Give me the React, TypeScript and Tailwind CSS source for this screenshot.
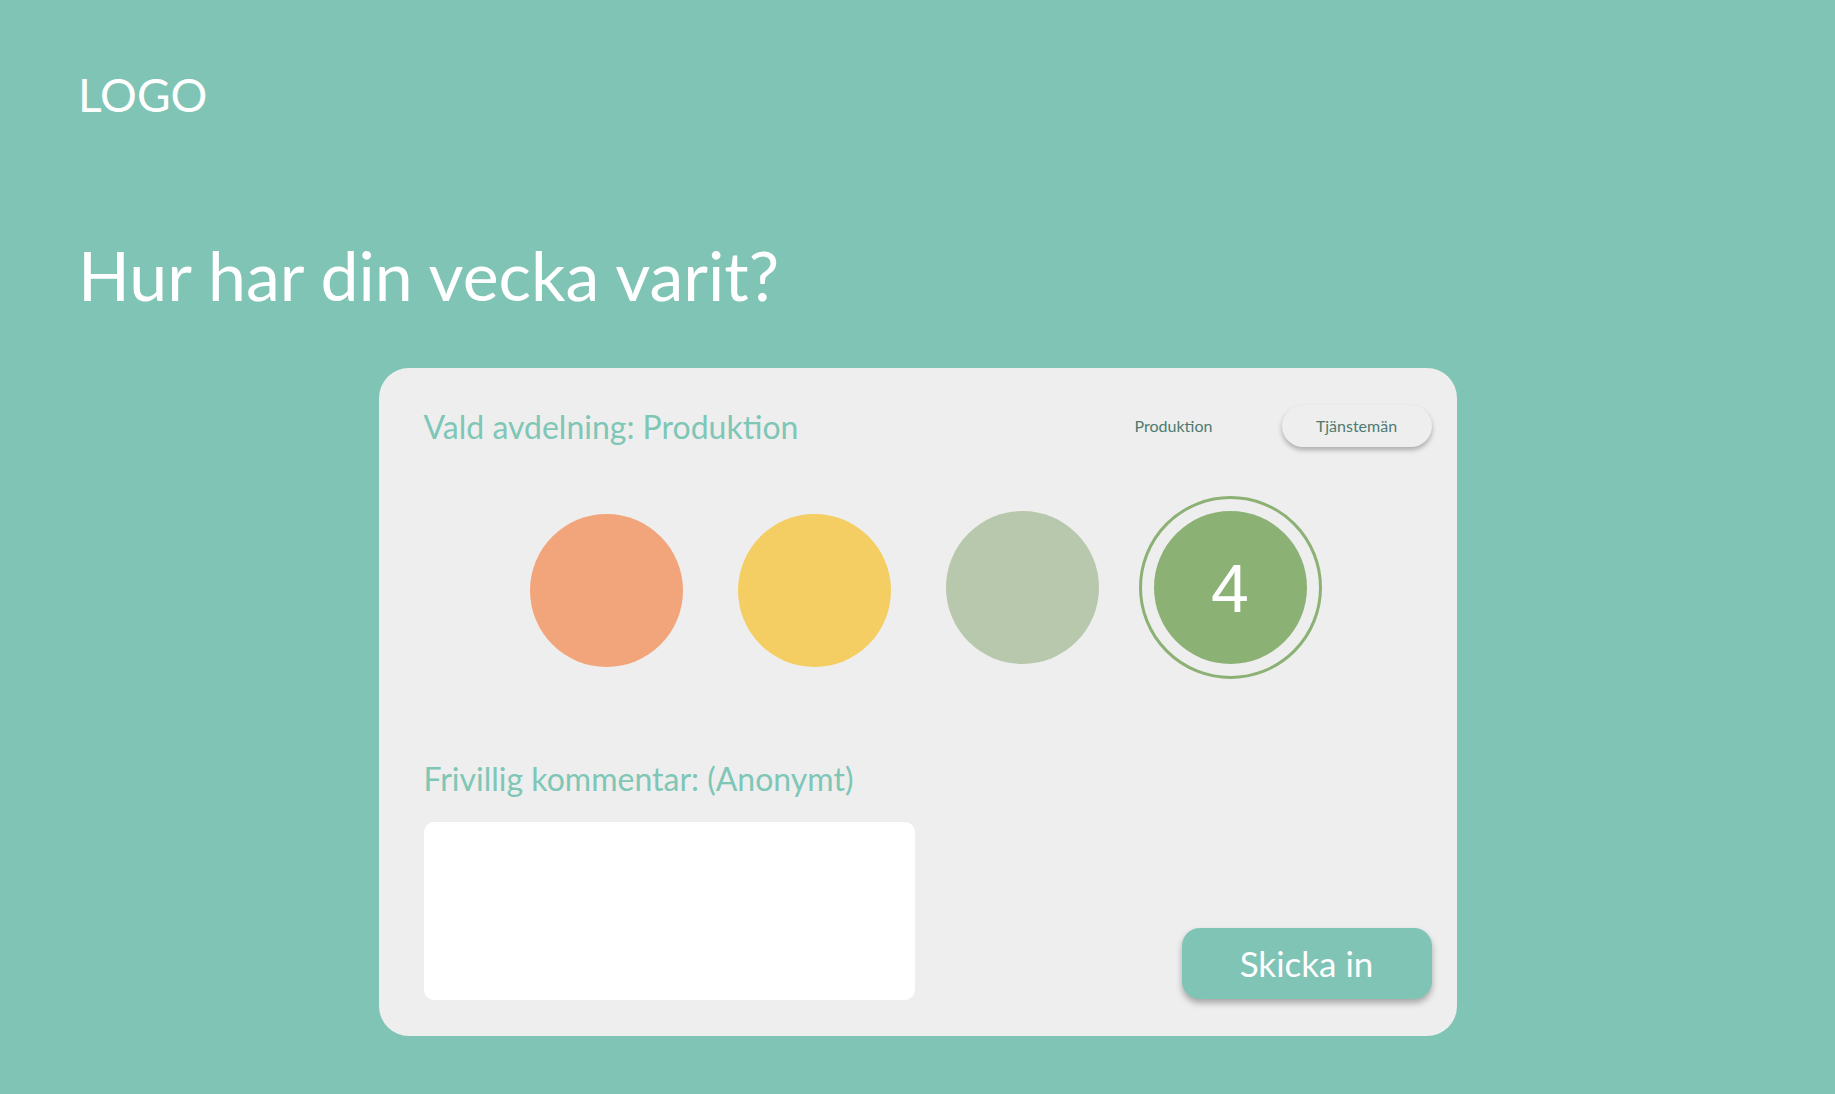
import { useState } from "react";

const moods = [
  { value: 1, color: "bg-[#f2a57b]" },
  { value: 2, color: "bg-[#f4ce63]" },
  { value: 3, color: "bg-[#b7c8ac]" },
  { value: 4, color: "bg-[#8bb174]" },
];

export default function App() {
  const [dept, setDept] = useState("Tjänstemän");
  const [mood, setMood] = useState(4);
  const [comment, setComment] = useState("");

  return (
    <div className="min-h-screen bg-[#80c4b6] px-[78px] pt-[72px] pb-[58px] font-['Lato','Noto_Sans',sans-serif]">
      <div className="text-[46px] leading-[45px] text-white">LOGO</div>

      <h1 className="mt-[124px] text-[68px] leading-[68px] text-white">Hur har din vecka varit?</h1>

      {/* Card */}
      <div className="mx-auto mt-[59px] w-[1078px] rounded-[30px] bg-[#eeeeee] pt-[37px] pb-[36px] pl-[45px] pr-[25px]">
        <div className="flex h-[42px] items-center justify-between">
          <h2 className="text-[32px] leading-[33px] text-[#7ec6b6]">Vald avdelning: Produktion</h2>
          <div className="flex gap-[33px]">
            {["Produktion", "Tjänstemän"].map((d) => (
              <button
                key={d}
                onClick={() => setDept(d)}
                className={`h-[42px] w-[150px] rounded-full text-[16px] text-[#4d7a70] ${
                  dept === d ? "bg-[#eeeeee] shadow-[0_3px_5px_rgba(0,0,0,0.28)]" : ""
                }`}
              >
                {d}
              </button>
            ))}
          </div>
        </div>

        {/* Mood circles */}
        <div className="mt-[49px] flex gap-[25px] pl-[91px]">
          {moods.map((m) => (
            <button
              key={m.value}
              onClick={() => setMood(m.value)}
              className={`flex h-[183px] w-[183px] items-center justify-center rounded-full ${
                mood === m.value ? "border-[3px] border-[#8bb174]" : ""
              }`}
            >
              <span
                className={`flex h-[153px] w-[153px] items-center justify-center rounded-full ${m.color} ${
                  m.value < 3 ? "mt-[6px]" : ""
                }`}
              >
                {mood === m.value && (
                  <span className="font-['Liberation_Sans',sans-serif] text-[68px] leading-none text-white">
                    {m.value}
                  </span>
                )}
              </span>
            </button>
          ))}
        </div>

        <h2 className="mt-[83px] text-[32px] leading-[33px] text-[#7ec6b6]">Frivillig kommentar: (Anonymt)</h2>

        <div className="mt-[27px] flex items-end justify-between">
          <textarea
            value={comment}
            onChange={(e) => setComment(e.target.value)}
            className="h-[178px] w-[491px] resize-none rounded-[10px] bg-white p-4 text-lg text-gray-700 outline-none"
          />
          <button className="mb-[1px] h-[71px] w-[250px] rounded-[18px] bg-[#80c4b6] text-[35px] text-white shadow-[0_4px_6px_rgba(0,0,0,0.3)]">
            Skicka in
          </button>
        </div>
      </div>
    </div>
  );
}
